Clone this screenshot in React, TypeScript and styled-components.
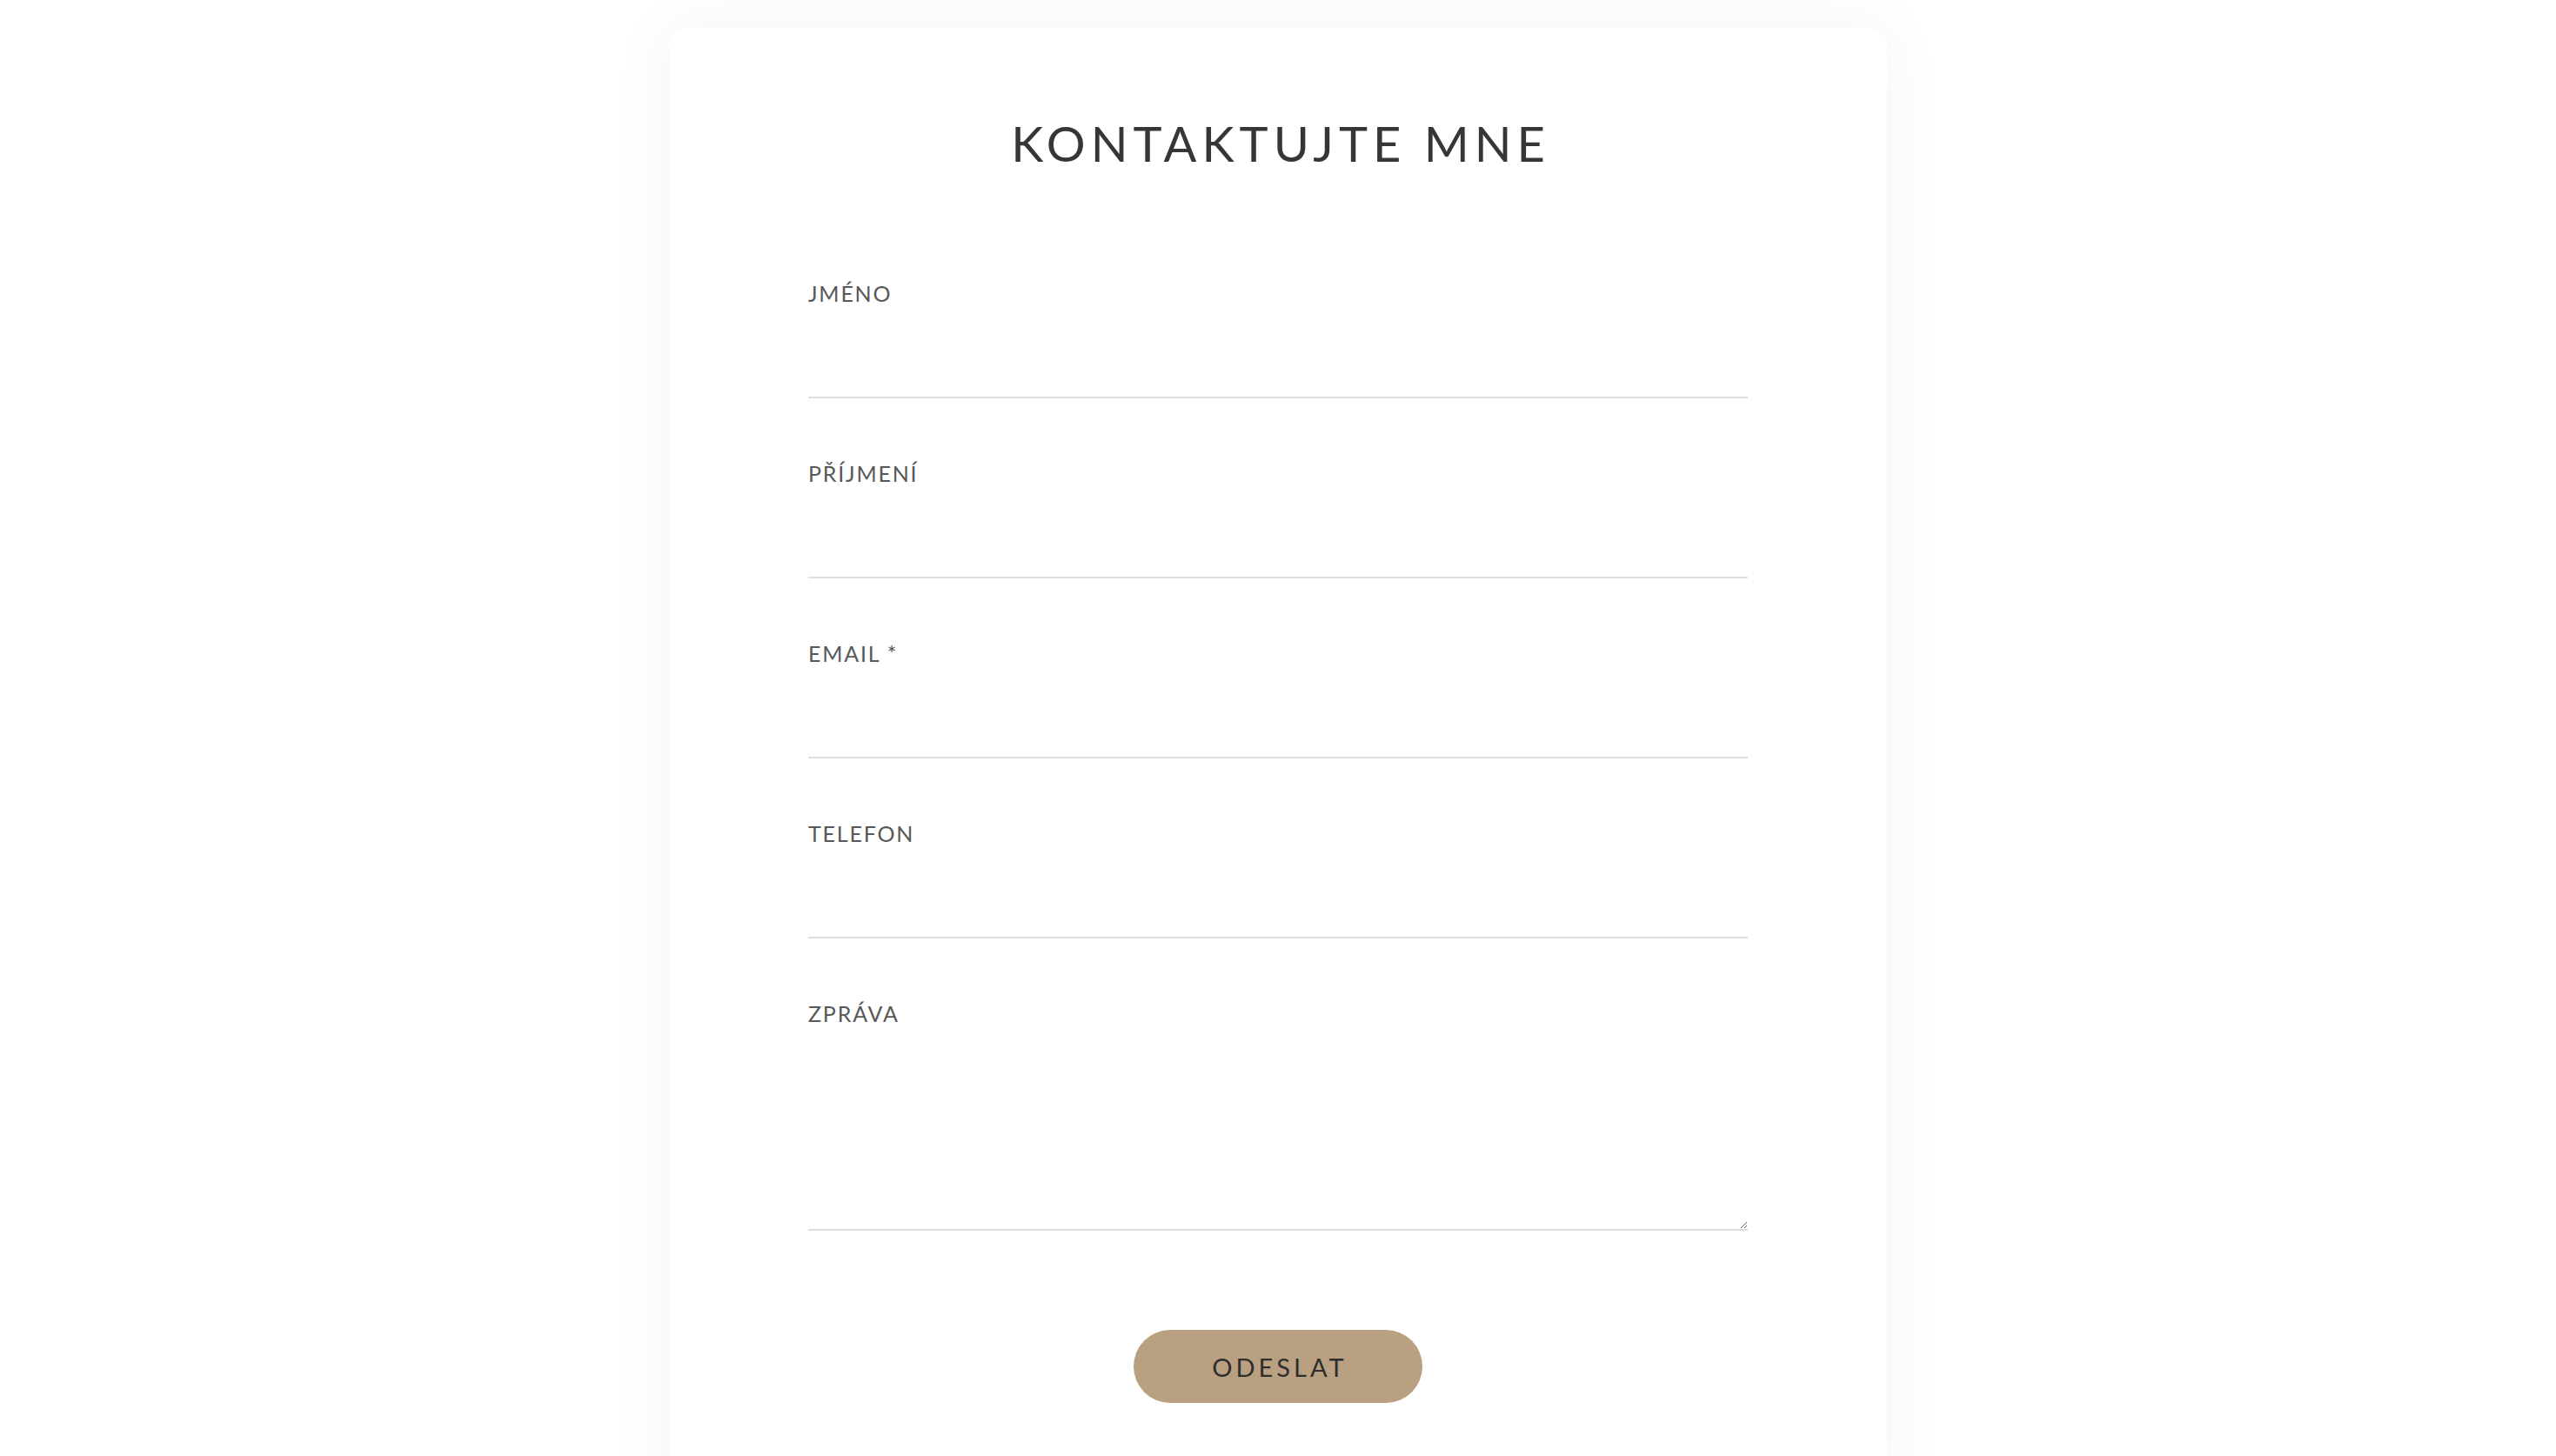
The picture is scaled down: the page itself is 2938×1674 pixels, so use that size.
import React from "react";
import styled, { createGlobalStyle } from "styled-components";

const Global = createGlobalStyle`
  html, body {
    margin: 0;
    padding: 0;
    background: #ffffff;
    height: 100%;
    overflow: hidden;
  }
  * { box-sizing: border-box; }
`;

const Page = styled.div`
  display: flex;
  justify-content: center;
  padding-top: 32px;
  min-height: 1674px;
  background: #ffffff;
`;

const Card = styled.form`
  width: 1400px;
  background: #ffffff;
  border-radius: 20px;
  box-shadow: 0 0 70px 6px rgba(0, 0, 0, 0.045);
  padding: 99px 160px 120px;
  display: flex;
  flex-direction: column;
`;

const Title = styled.h1`
  margin: 0 0 120px;
  font-family: "Lato", "Liberation Sans", sans-serif;
  font-weight: 400;
  font-size: 56px;
  line-height: 67px;
  letter-spacing: 6px;
  color: #363636;
  text-align: center;
  padding-left: 6px;
`;

const Field = styled.div<{ $last?: boolean }>`
  display: flex;
  flex-direction: column;
  margin-bottom: ${(p) => (p.$last ? "114px" : "67px")};
`;

const Label = styled.label`
  font-family: "Lato", "Liberation Sans", sans-serif;
  font-size: 25px;
  line-height: 38px;
  letter-spacing: 1.8px;
  color: #585858;
  font-weight: 400;
`;

const Input = styled.input`
  height: 102px;
  border: none;
  border-bottom: 2px solid #dddddd;
  background: transparent;
  outline: none;
  font-family: "Lato", "Liberation Sans", sans-serif;
  font-size: 25px;
  padding: 0;
`;

const TextArea = styled.textarea`
  height: 231px;
  border: none;
  border-bottom: 2px solid #dddddd;
  background: transparent;
  outline: none;
  resize: vertical;
  font-family: "Lato", "Liberation Sans", sans-serif;
  font-size: 25px;
  padding: 0;
  margin: 0;
`;

const Actions = styled.div`
  display: flex;
  justify-content: center;
`;

const Submit = styled.button`
  width: 332px;
  height: 84px;
  border: none;
  border-radius: 42px;
  background: #b9a081;
  color: #2e2e2e;
  font-family: "Lato", "Liberation Sans", sans-serif;
  font-weight: 400;
  font-size: 29px;
  letter-spacing: 4px;
  padding: 0 0 0 4px;
  cursor: pointer;
`;

const fields = [
  { id: "jmeno", label: "JMÉNO" },
  { id: "prijmeni", label: "PŘÍJMENÍ" },
  { id: "email", label: "EMAIL *" },
  { id: "telefon", label: "TELEFON" },
];

export default function App() {
  return (
    <>
      <Global />
      <Page>
        <Card onSubmit={(e) => e.preventDefault()}>
          <Title>KONTAKTUJTE MNE</Title>
          {fields.map((f) => (
            <Field key={f.id}>
              <Label htmlFor={f.id}>{f.label}</Label>
              <Input id={f.id} type="text" />
            </Field>
          ))}
          <Field $last>
            <Label htmlFor="zprava">ZPRÁVA</Label>
            <TextArea id="zprava" />
          </Field>
          <Actions>
            <Submit type="submit">ODESLAT</Submit>
          </Actions>
        </Card>
      </Page>
    </>
  );
}
